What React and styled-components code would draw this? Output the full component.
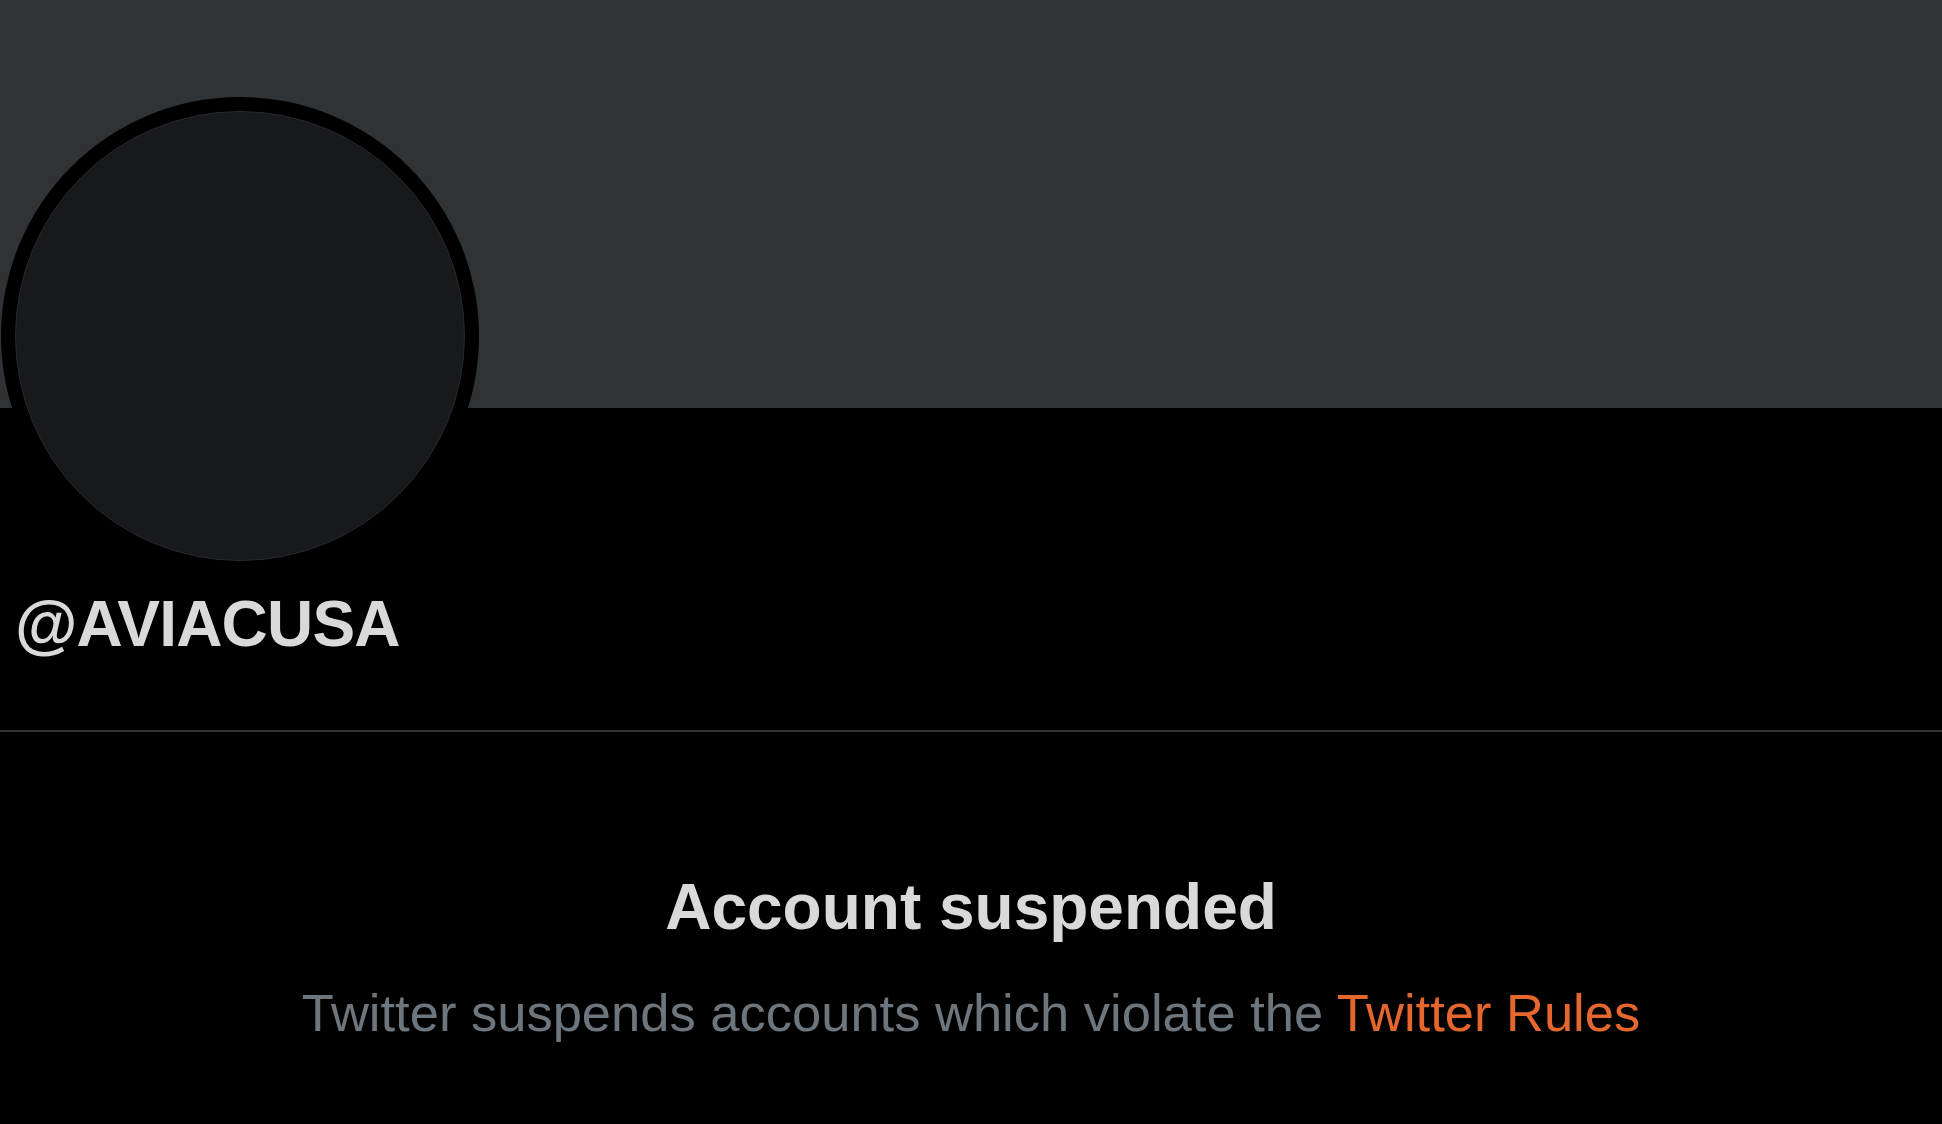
import styled, { createGlobalStyle } from 'styled-components';

// Page-wide reset and dark background

const GlobalStyle = createGlobalStyle`
  html, body {
    margin: 0;
    padding: 0;
    background: #000000;
  }
  body {
    font-family: "Liberation Sans", Arial, sans-serif;
  }
`;

const Page = styled.main`
  min-height: 1124px;
  background: #000000;
  display: flex;
  flex-direction: column;
`;

const Header = styled.header`
  position: relative;
`;

const Banner = styled.div`
  height: 408px;
  background: #2f3336;
`;

const Avatar = styled.div`
  position: absolute;
  top: 97px;
  left: 1px;
  width: 478px;
  height: 478px;
  box-sizing: border-box;
  border-radius: 50%;
  background: #000000;
  padding: 14px;
`;

const AvatarInner = styled.div`
  width: 100%;
  height: 100%;
  box-sizing: border-box;
  border-radius: 50%;
  background: #18191d;
  border: 1px solid #26282c;
`;

const ProfileInfo = styled.section`
  padding: 184px 15px 74px;
`;

const Handle = styled.h2`
  margin: 0;
  font-size: 64px;
  line-height: 1;
  font-weight: 700;
  letter-spacing: -0.8px;
  color: #d9d9d9;
`;

const Divider = styled.hr`
  margin: 0;
  border: none;
  height: 2px;
  background: #2f3336;
`;

const Notice = styled.section`
  display: flex;
  flex-direction: column;
  align-items: center;
  padding-top: 143px;
  gap: 48px;
`;

const NoticeTitle = styled.h1`
  margin: 0;
  font-size: 64px;
  line-height: 1;
  font-weight: 700;
  color: #d9d9d9;
`;

const NoticeText = styled.p`
  margin: 0;
  font-size: 52.5px;
  line-height: 1;
  color: #6e767d;
`;

const RulesLink = styled.a`
  color: #e5672e;
  text-decoration: none;
  cursor: pointer;
`;

export default function App() {
  return (
    <Page>
      <GlobalStyle />
      <Header>
        <Banner />
        <Avatar>
          <AvatarInner />
        </Avatar>
      </Header>

      <ProfileInfo>
        <Handle>@AVIACUSA</Handle>
      </ProfileInfo>

      <Divider />

      <Notice>
        <NoticeTitle>Account suspended</NoticeTitle>
        <NoticeText>
          Twitter suspends accounts which violate the{' '}
          <RulesLink href="#">Twitter Rules</RulesLink>
        </NoticeText>
      </Notice>
    </Page>
  );
}
